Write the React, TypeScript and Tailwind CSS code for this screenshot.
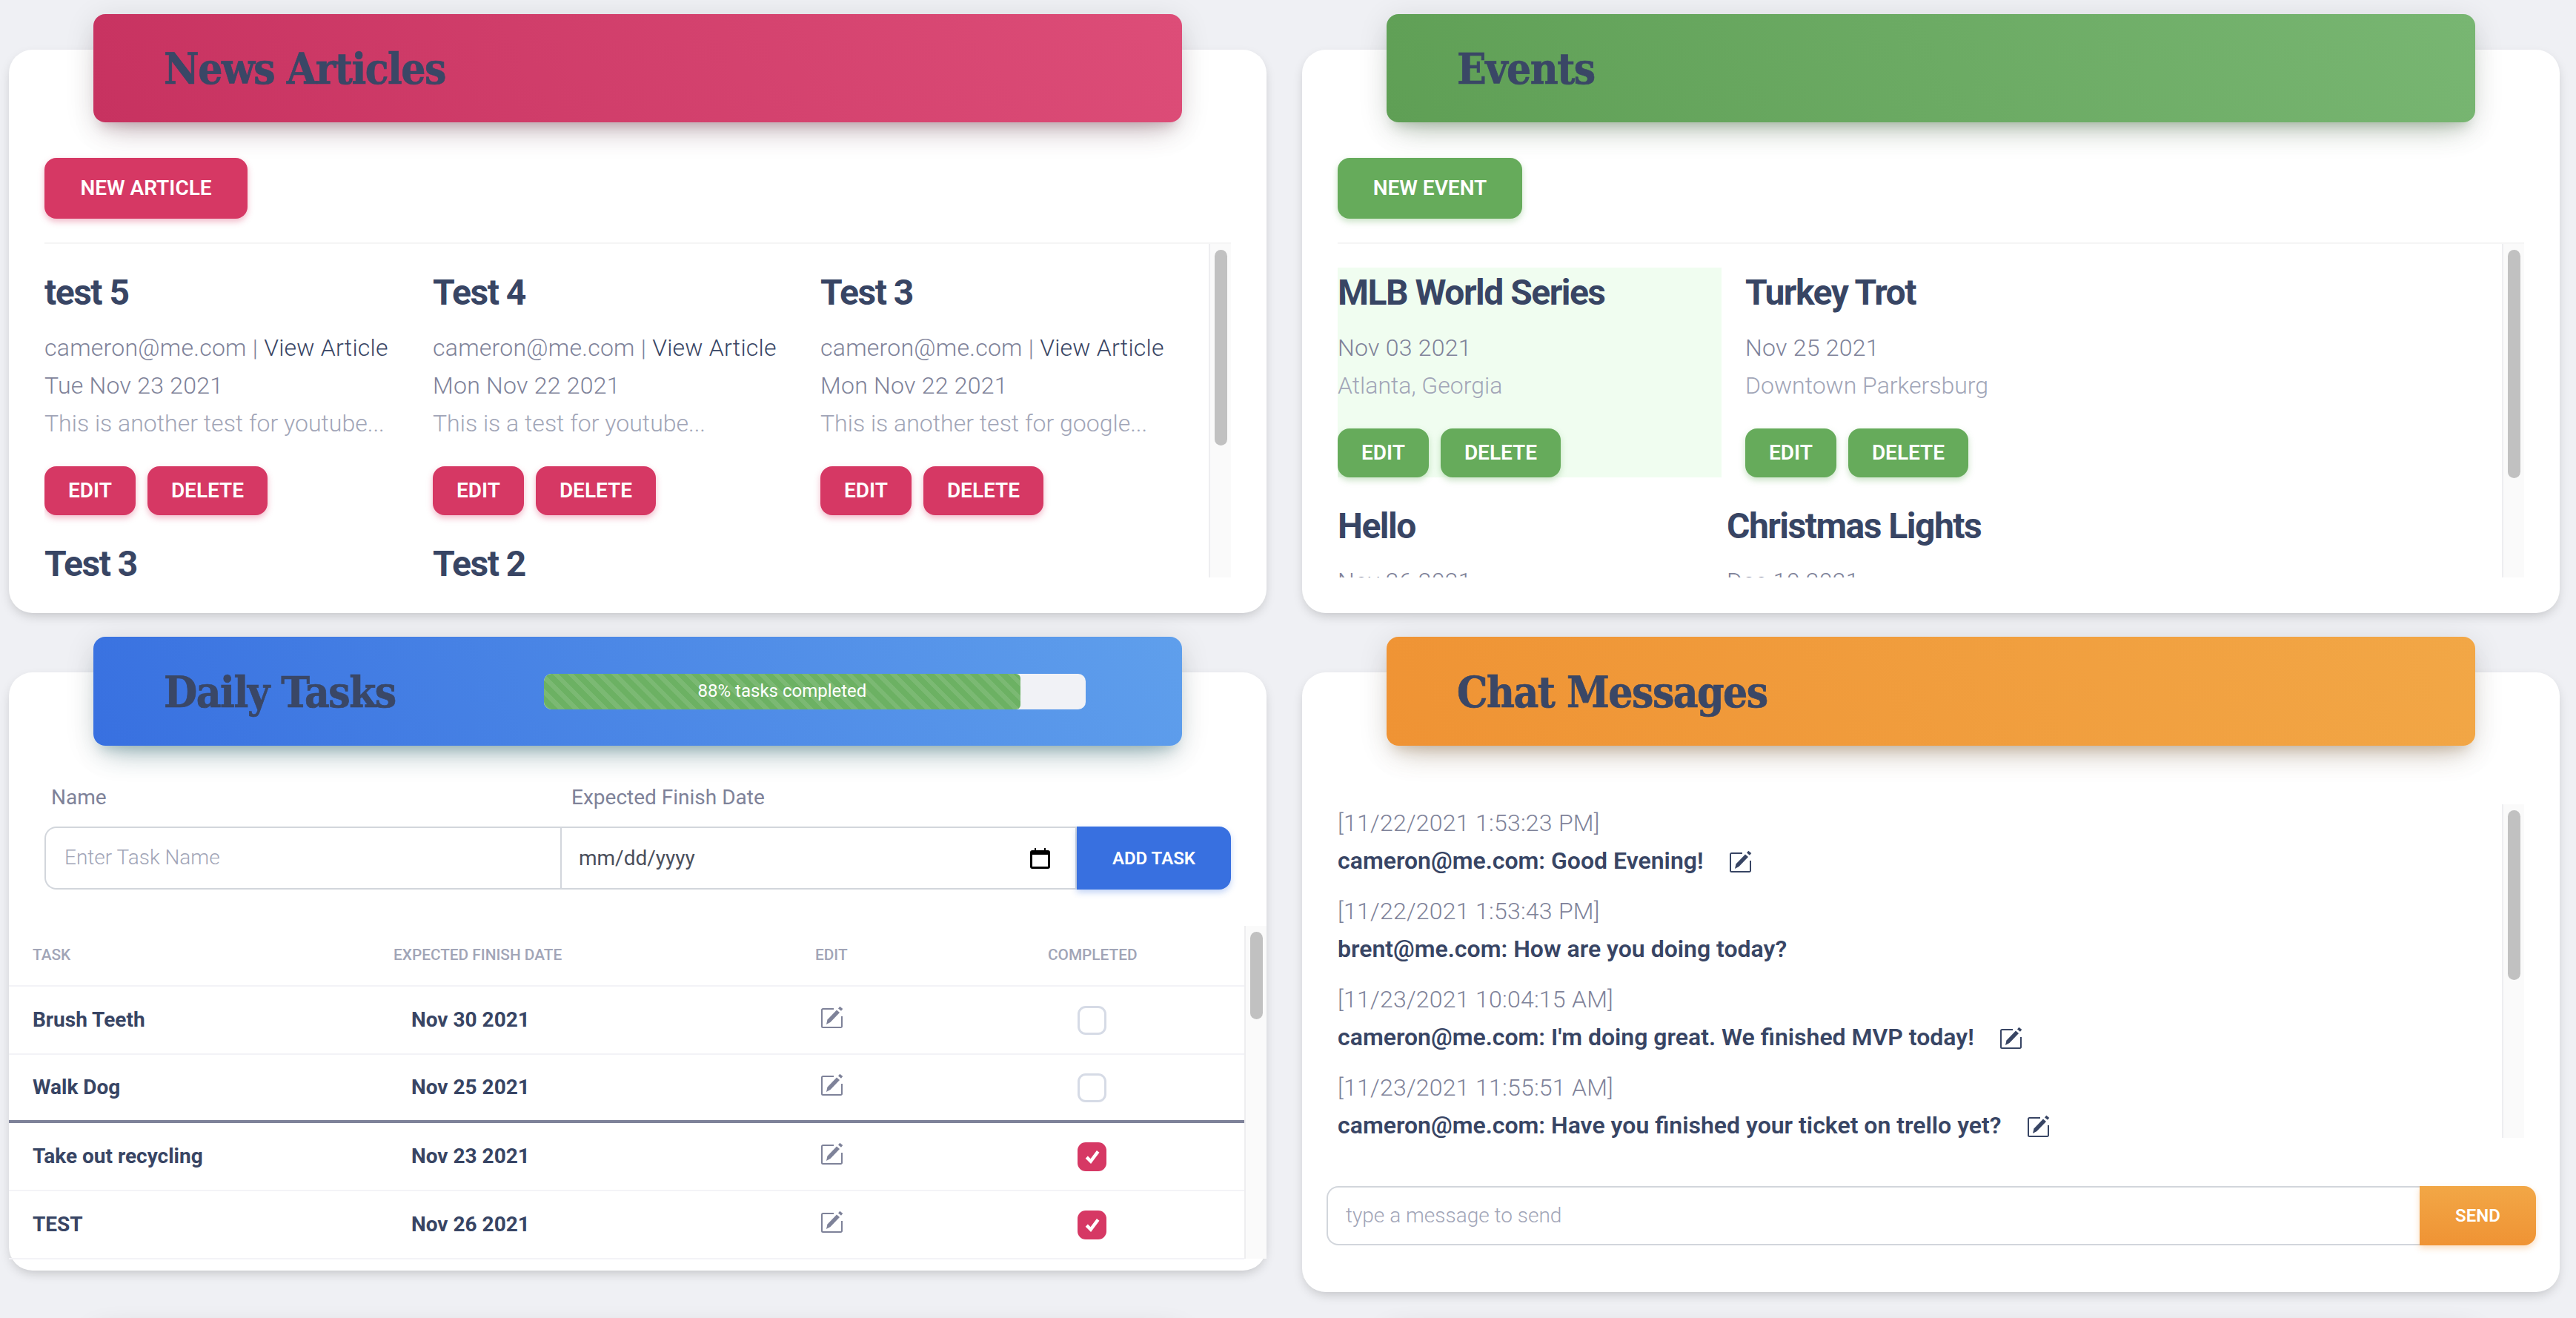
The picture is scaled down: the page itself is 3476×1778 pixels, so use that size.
import React from 'react';

const slab = "font-['DejaVu_Serif_Condensed','DejaVu_Serif',serif]";
const cardCls = 'bg-white rounded-[32px] shadow-[0_6px_16px_-4px_rgba(0,0,0,0.22)]';

function EditIcon({ className }: { className?: string }) {
  return (
    <svg viewBox="0 0 30 30" className={`w-[30px] h-[30px] shrink-0 ${className ?? ''}`} fill="currentColor">
      <path d="M17 4H2.500a1.500 1.500 0 0 0-1.500 1.500v22a1.500 1.500 0 0 0 1.500 1.500h24a1.500 1.500 0 0 0 1.500-1.500V14" fill="none" stroke="currentColor" strokeWidth="2" />
      <path d="M7 25l1.500-6.500L21 5.500l4 3.500L12.500 22z" />
      <path d="M23 3.500l2.300-2.700 4 3.200-2.300 2.800z" />
    </svg>
  );
}

function Scrollbar({ thumb }: { thumb: string }) {
  return (
    <div className="w-[30px] shrink-0 self-stretch bg-[#fafafa] border-l-2 border-[#eeeef0] pl-[6px] pt-[8px]">
      <div className={`w-[17px] rounded-full bg-[#c1c1c1] ${thumb}`} />
    </div>
  );
}

function PanelButton({ label, bg, shadow, className }: { label: string; bg: string; shadow: string; className: string }) {
  return (
    <button className={`uppercase text-white font-semibold text-[28px] rounded-[16px] ${bg} ${shadow} ${className}`}>
      {label}
    </button>
  );
}

const articles = [
  { title: 'test 5', date: 'Tue Nov 23 2021', text: 'This is another test for youtube...' },
  { title: 'Test 4', date: 'Mon Nov 22 2021', text: 'This is a test for youtube...' },
  { title: 'Test 3', date: 'Mon Nov 22 2021', text: 'This is another test for google...' },
  { title: 'Test 3', date: 'Mon Nov 22 2021', text: 'This is a test' },
  { title: 'Test 2', date: 'Mon Nov 22 2021', text: 'This is a test' },
];

const events = [
  { title: 'MLB World Series', date: 'Nov 03 2021', place: 'Atlanta, Georgia', cls: 'w-[518px] bg-[#f0fdf0]' },
  { title: 'Turkey Trot', date: 'Nov 25 2021', place: 'Downtown Parkersburg', cls: 'w-[518px]' },
  { title: 'Hello', date: 'Nov 26 2021', place: 'Here', cls: 'w-[493px]' },
  { title: 'Christmas Lights', date: 'Dec 10 2021', place: 'Downtown', cls: 'w-[518px]' },
];

const tasks = [
  { name: 'Brush Teeth', date: 'Nov 30 2021', done: false, line: 'border-b-2 border-[#f3f3f7]' },
  { name: 'Walk Dog', date: 'Nov 25 2021', done: false, line: 'border-b-4 border-[#7e8299]' },
  { name: 'Take out recycling', date: 'Nov 23 2021', done: true, line: 'border-b-2 border-[#f3f3f7]' },
  { name: 'TEST', date: 'Nov 26 2021', done: true, line: 'border-b-2 border-[#f3f3f7]' },
];

const messages = [
  { time: '[11/22/2021 1:53:23 PM]', text: 'cameron@me.com: Good Evening!', edit: true },
  { time: '[11/22/2021 1:53:43 PM]', text: 'brent@me.com: How are you doing today?', edit: false },
  { time: '[11/23/2021 10:04:15 AM]', text: "cameron@me.com: I'm doing great. We finished MVP today!", edit: true },
  { time: '[11/23/2021 11:55:51 AM]', text: 'cameron@me.com: Have you finished your ticket on trello yet?', edit: true },
];

function Header({ title, gradient, shadow, h, children }: { title: string; gradient: string; shadow: string; h: string; children?: React.ReactNode }) {
  return (
    <div className={`-mt-[48px] mx-[114px] ${h} rounded-[16px] flex items-center pl-[95px] ${gradient} ${shadow}`}>
      <h2 className={`${slab} font-bold text-[58px] text-[#3a4766] w-[513px] shrink-0 tracking-[-1.5px] pt-[3px] [-webkit-text-stroke:0.7px_#3a4766]`}>{title}</h2>
      {children}
    </div>
  );
}

export default function App() {
  return (
    <div className="w-[3476px] h-[1778px] overflow-hidden bg-[#eff0f4] font-['Roboto',sans-serif] pl-[12px] pt-[67px]">
      <div className="grid grid-cols-[1697px_1697px] gap-x-[48px] gap-y-[80px] items-start">
        {/* News */}
        <section className={`h-[760px] ${cardCls}`}>
          <Header
            title="News Articles"
            h="h-[146px]"
            gradient="bg-[linear-gradient(60deg,#c73260,#dd4d78)]"
            shadow="shadow-[0_24px_40px_-20px_rgba(130,70,90,0.35),0_8px_40px_0_rgba(0,0,0,0.12),0_14px_16px_-10px_rgba(130,70,90,0.25)]"
          />
          <div className="px-[48px] pt-[48px]">
            <PanelButton label="New Article" bg="bg-[#d63864]" shadow="shadow-[0_4px_8px_rgba(214,56,100,0.35)]" className="w-[274px] h-[82px]" />
            <div className="mt-[32px] h-[452px] flex border-t-2 border-[#f5f5f5] overflow-hidden">
              <div className="flex-1 min-w-0 pt-[32px] grid grid-cols-[524px_523px_523px] content-start gap-y-[32px]">
                {articles.map((a, i) => (
                  <div key={i}>
                    <h3 className="text-[48px] leading-[67px] font-bold tracking-[-1.5px] text-[#384564] mb-[16px]">{a.title}</h3>
                    <p className="text-[32px] leading-[51px] font-light tracking-[0.25px] text-[#7e8299]">
                      cameron@me.com | <span className="text-[#384564]">View Article</span>
                    </p>
                    <p className="text-[32px] leading-[51px] font-light tracking-[0.25px] text-[#7e8299]">{a.date}</p>
                    <p className="text-[32px] leading-[51px] font-light text-[#a1a5b7]">{a.text}</p>
                    <div className="mt-[32px] flex gap-[16px]">
                      <PanelButton label="Edit" bg="bg-[#d63864]" shadow="shadow-[0_4px_8px_rgba(214,56,100,0.35)]" className="w-[123px] h-[66px]" />
                      <PanelButton label="Delete" bg="bg-[#d63864]" shadow="shadow-[0_4px_8px_rgba(214,56,100,0.35)]" className="w-[162px] h-[66px]" />
                    </div>
                  </div>
                ))}
              </div>
              <Scrollbar thumb="h-[264px]" />
            </div>
          </div>
        </section>

        {/* Events */}
        <section className={`h-[760px] ${cardCls}`}>
          <Header
            title="Events"
            h="h-[146px]"
            gradient="bg-[linear-gradient(60deg,#5f9f55,#78b672)]"
            shadow="shadow-[0_24px_40px_-20px_rgba(80,120,75,0.35),0_8px_40px_0_rgba(0,0,0,0.12),0_14px_16px_-10px_rgba(80,120,75,0.25)]"
          />
          <div className="px-[48px] pt-[48px]">
            <PanelButton label="New Event" bg="bg-[#66ab5b]" shadow="shadow-[0_4px_8px_rgba(102,171,91,0.35)]" className="w-[249px] h-[82px]" />
            <div className="mt-[32px] h-[452px] flex border-t-2 border-[#f5f5f5] overflow-hidden">
              <div className="flex-1 min-w-0 pt-[32px] flex flex-wrap content-start gap-x-[32px] gap-y-[32px]">
                {events.map((e, i) => (
                  <div key={i} className={e.cls}>
                    <h3 className="text-[48px] leading-[67px] font-bold tracking-[-1.5px] text-[#384564] mb-[16px]">{e.title}</h3>
                    <p className="text-[32px] leading-[51px] font-light tracking-[0.25px] text-[#7e8299]">{e.date}</p>
                    <p className="text-[32px] leading-[51px] font-light text-[#a1a5b7]">{e.place}</p>
                    <div className="mt-[32px] flex gap-[16px]">
                      <PanelButton label="Edit" bg="bg-[#66ab5b]" shadow="shadow-[0_4px_8px_rgba(102,171,91,0.35)]" className="w-[123px] h-[66px]" />
                      <PanelButton label="Delete" bg="bg-[#66ab5b]" shadow="shadow-[0_4px_8px_rgba(102,171,91,0.35)]" className="w-[162px] h-[66px]" />
                    </div>
                  </div>
                ))}
              </div>
              <Scrollbar thumb="h-[308px]" />
            </div>
          </div>
        </section>

        {/* Daily tasks */}
        <section className={`h-[807px] ${cardCls}`}>
          <Header
            title="Daily Tasks"
            h="h-[147px]"
            gradient="bg-[linear-gradient(60deg,#3870e0,#5f9fec)]"
            shadow="shadow-[0_24px_40px_-20px_rgba(40,110,120,0.4),0_8px_40px_0_rgba(0,0,0,0.12),0_14px_16px_-10px_rgba(40,110,120,0.25)]"
          >
            <div className="w-[731px] h-[48px] rounded-[10px] bg-[#f1f2f6] overflow-hidden">
              <div className="w-[643px] h-full rounded-r-[6px] bg-[#6cb163] bg-[repeating-linear-gradient(45deg,rgba(255,255,255,0.1)_0_6px,transparent_6px_14px)] flex items-center justify-center text-white text-[24px] pb-[2px]">
                88% tasks completed
              </div>
            </div>
          </Header>
          <div className="pl-[48px] pr-[48px] pt-[50px]">
            <div className="flex text-[28px] text-[#7e8299] leading-[40px]">
              <label className="w-[711px] pl-[9px]">Name</label>
              <label>Expected Finish Date</label>
            </div>
            <div className="mt-[19px] flex h-[85px]">
              <input
                placeholder="Enter Task Name"
                className="w-[696px] border-2 border-r-0 border-[#d2d6dc] rounded-l-[16px] pl-[25px] pb-[2px] text-[28px] font-light placeholder:text-[#a1a5b7] outline-none"
              />
              <div className="flex-1 border-2 border-[#d2d6dc] flex items-center justify-between pl-[23px] pr-[34px] text-[28px] text-[#4b4f5c]">
                <span>mm/dd/yyyy</span>
                <svg viewBox="0 0 27 28" className="w-[27px] h-[28px]">
                  <path d="M6 0h2v3h11V0h2v3h3a3 3 0 0 1 3 3v19a3 3 0 0 1-3 3H3a3 3 0 0 1-3-3V6a3 3 0 0 1 3-3h3zM3 9v16h21V9z" fill="#000" />
                </svg>
              </div>
              <button className="w-[208px] rounded-r-[16px] bg-[#3870e0] text-white font-semibold text-[24px] uppercase shadow-[0_4px_8px_rgba(56,112,224,0.3)]">
                Add Task
              </button>
            </div>
          </div>
          <div className="mt-[49px] h-[449px] flex">
            <div className="flex-1 min-w-0">
              <div className="h-[82px] border-b-2 border-[#f3f3f7] grid grid-cols-[487px_569px_314px_1fr] items-center pl-[32px] text-[20.800px] font-medium uppercase text-[#a1a5b7]">
                <span>Task</span>
                <span>Expected Finish Date</span>
                <span>Edit</span>
                <span>Completed</span>
              </div>
              {tasks.map((t) => (
                <div key={t.name} className={`h-[92px] ${t.line} grid grid-cols-[511px_553px_346px_1fr] items-center pl-[32px] text-[28px] font-bold text-[#384564]`}>
                  <span>{t.name}</span>
                  <span>{t.date}</span>
                  <EditIcon className="text-[#7e8299] -mt-[8px]" />
                  {t.done ? (
                    <span className="w-[39px] h-[39px] rounded-[11px] bg-[#d63864] flex items-center justify-center">
                      <svg viewBox="0 0 20 20" className="w-[22px] h-[22px]">
                        <path d="M3 11l5 5 9-12" fill="none" stroke="#fff" strokeWidth="4" />
                      </svg>
                    </span>
                  ) : (
                    <span className="w-[39px] h-[39px] rounded-[11px] border-[3px] border-[#d6dbe6]" />
                  )}
                </div>
              ))}
            </div>
            <Scrollbar thumb="h-[118px]" />
          </div>
        </section>

        {/* Chat */}
        <section className={`h-[836px] ${cardCls}`}>
          <Header
            title="Chat Messages"
            h="h-[147px]"
            gradient="bg-[linear-gradient(60deg,#ef9334,#f2a746)]"
            shadow="shadow-[0_24px_40px_-20px_rgba(150,110,60,0.35),0_8px_40px_0_rgba(0,0,0,0.12),0_14px_16px_-10px_rgba(150,110,60,0.25)]"
          />
          <div className="mx-[48px] mt-[79px] h-[450px] flex overflow-hidden">
            <div className="flex-1 min-w-0">
              {messages.map((m) => (
                <div key={m.time} className="h-[119px]">
                  <p className="text-[32px] leading-[51px] font-light tracking-[0.25px] text-[#7e8299]">{m.time}</p>
                  <p className="text-[32px] leading-[51px] font-semibold text-[#384564] flex items-center gap-[35px]">
                    {m.text}
                    {m.edit && <EditIcon />}
                  </p>
                </div>
              ))}
            </div>
            <Scrollbar thumb="h-[229px]" />
          </div>
          <div className="mt-[65px] ml-[33px] mr-[32px] flex h-[80px]">
            <input
              placeholder="type a message to send"
              className="flex-1 min-w-0 border-2 border-r-0 border-[#d2d6dc] rounded-l-[16px] pl-[24px] text-[28px] font-light placeholder:text-[#a1a5b7] outline-none"
            />
            <button className="w-[157px] rounded-r-[16px] bg-gradient-to-t from-[#ef9334] to-[#f2a746] text-white font-semibold text-[24px] uppercase shadow-[0_4px_8px_rgba(239,147,52,0.3)]">
              Send
            </button>
          </div>
        </section>

        {/* top of the next row, only its shadow shows above the fold */}
        <div className="-mt-[26px] mx-[114px] h-[60px] rounded-[16px] bg-[#e4e5e9] shadow-[0_4px_40px_0_rgba(0,0,0,0.2)]" />
        <div className="-mt-[26px] mx-[114px] h-[60px] rounded-[16px] bg-[#e4e5e9] shadow-[0_4px_40px_0_rgba(0,0,0,0.2)]" />
      </div>
    </div>
  );
}
